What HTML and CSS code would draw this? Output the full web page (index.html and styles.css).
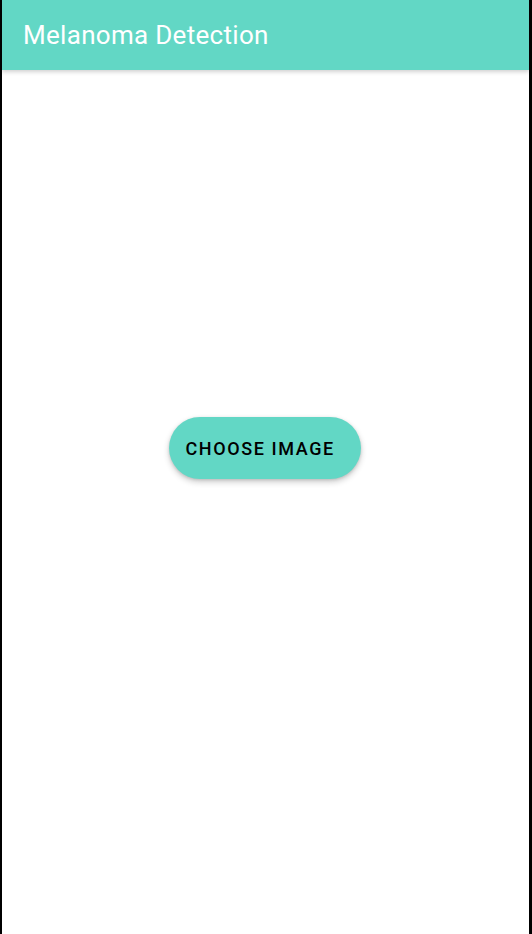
FILE: index.html
```html
<!DOCTYPE html>
<html>
<head>
<meta charset="utf-8">
<link rel="stylesheet" href="styles.css">
</head>
<body>
<div class="screen">
  <header class="appbar">
    <h1 class="title">Melanoma Detection</h1>
  </header>
  <main class="content">
    <button class="choose-btn">CHOOSE IMAGE</button>
  </main>
</div>
</body>
</html>
```
FILE: styles.css
```css
html, body {
  margin: 0;
  padding: 0;
  height: 100%;
  background: #000;
}
body {
  font-family: Roboto, "Noto Sans", sans-serif;
}
.screen {
  margin: 0 3px 0 2px;
  height: 934px;
  background: #fff;
  display: flex;
  flex-direction: column;
  overflow: hidden;
}
.appbar {
  height: 70px;
  flex: none;
  background: #62d7c5;
  display: flex;
  align-items: center;
  padding-left: 21px;
  box-shadow: 0 2px 4px rgba(0,0,0,0.18);
  position: relative;
  z-index: 1;
}
.title {
  margin: 0;
  color: #fff;
  font-size: 26px;
  font-weight: 400;
  letter-spacing: 0.3px;
}
.content {
  flex: 1;
  display: flex;
  justify-content: center;
  align-items: flex-start;
  padding-top: 347px;
}
.choose-btn {
  height: 62px;
  width: 192px;
  margin-left: -2px;
  border: none;
  border-radius: 31px;
  background: #62d7c5;
  color: #000;
  font-family: Roboto, "Noto Sans", sans-serif;
  font-size: 18px;
  font-weight: 500;
  letter-spacing: 1.6px;
  text-align: left;
  padding: 0 0 0 17px;
  box-shadow: 0 3px 6px rgba(0,0,0,0.2), 0 1px 3px rgba(0,0,0,0.12);
}
```
